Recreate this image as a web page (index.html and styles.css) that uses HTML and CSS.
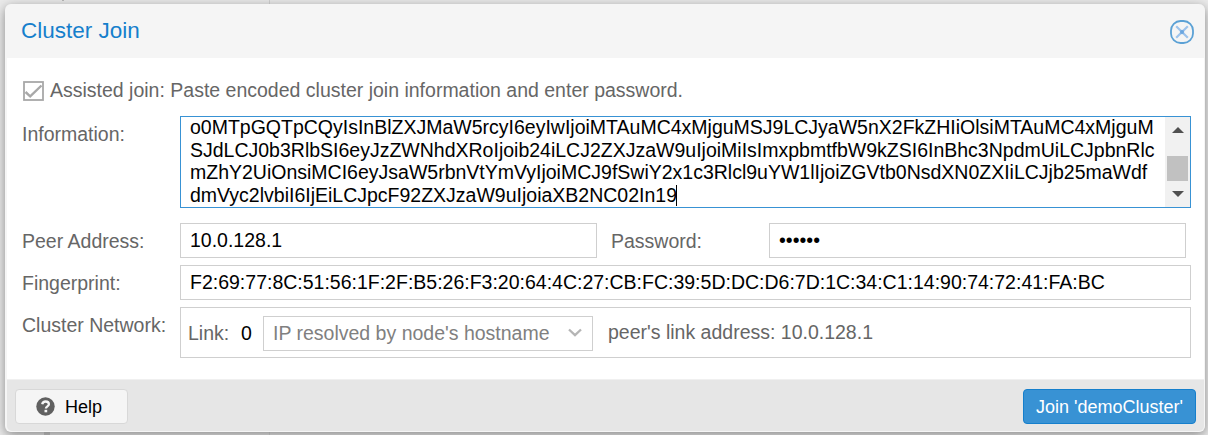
FILE: index.html
```html
<!DOCTYPE html>
<html lang="en">
<head>
    <meta charset="UTF-8">
    <title>Cluster Join</title>
    <link rel="stylesheet" href="styles.css">
</head>
<body>
    <!-- bits of the page behind the window -->
    <i class="behind behind-top"></i>
    <i class="behind behind-line"></i>
    <i class="behind behind-bottom"></i>

    <div class="window">
        <div class="header">
            <h1>Cluster Join</h1>
            <svg class="close" width="24" height="24" viewBox="0 0 24 24" fill="none">
                <rect x="1" y="1" width="22" height="22" rx="9.5" stroke="#5ba1d5" stroke-width="1.8"/>
                <path d="M6.2 6.2l11.6 11.6M17.8 6.2L6.2 17.8" stroke="#9dc3ec" stroke-width="2.2"/>
                <path d="M10.5 10.5l3 3M13.5 10.5l-3 3" stroke="#6ba6df" stroke-width="2"/>
            </svg>
        </div>

        <div class="body">
            <div class="assisted">
                <svg width="22" height="20" viewBox="0 0 22 20" fill="none">
                    <rect x="1" y="1" width="19" height="18" stroke="#a8a8a8" stroke-width="1.8"/>
                    <path d="M2.5 11l4.7 4.3L18.5 4.5" stroke="#a8a8a8" stroke-width="2.4"/>
                </svg>
                <span class="assisted-text">Assisted join: Paste encoded cluster join information and enter password.</span>
            </div>

            <div class="row info-row">
                <span class="label">Information:</span>
                <div class="info">
                    <div class="info-text">
                        <div>o0MTpGQTpCQyIsInBlZXJMaW5rcyI6eyIwIjoiMTAuMC4xMjguMSJ9LCJyaW5nX2FkZHIiOlsiMTAuMC4xMjguM</div>
                        <div>SJdLCJ0b3RlbSI6eyJzZWNhdXRoIjoib24iLCJ2ZXJzaW9uIjoiMiIsImxpbmtfbW9kZSI6InBhc3NpdmUiLCJpbnRlc</div>
                        <div>mZhY2UiOnsiMCI6eyJsaW5rbnVtYmVyIjoiMCJ9fSwiY2x1c3Rlcl9uYW1lIjoiZGVtb0NsdXN0ZXIiLCJjb25maWdf</div>
                        <div class="last-line"><span>dmVyc2lvbiI6IjEiLCJpcF92ZXJzaW9uIjoiaXB2NC02In19</span><i class="caret"></i></div>
                    </div>
                    <div class="scrollbar">
                        <svg width="12" height="6" viewBox="0 0 12 6"><path d="M0 6L6 0l6 6z" fill="#505050"/></svg>
                        <div class="thumb"></div>
                        <svg width="12" height="6" viewBox="0 0 12 6"><path d="M0 0l6 6 6-6z" fill="#505050"/></svg>
                    </div>
                </div>
            </div>

            <div class="row">
                <span class="label">Peer Address:</span>
                <div class="field half">10.0.128.1</div>
                <span class="label password-label">Password:</span>
                <div class="field half">••••••</div>
            </div>

            <div class="row">
                <span class="label">Fingerprint:</span>
                <div class="field full">F2:69:77:8C:51:56:1F:2F:B5:26:F3:20:64:4C:27:CB:FC:39:5D:DC:D6:7D:1C:34:C1:14:90:74:72:41:FA:BC</div>
            </div>

            <div class="row">
                <span class="label">Cluster Network:</span>
                <div class="network">
                    <span class="link-label">Link:</span>
                    <span class="link-number">0</span>
                    <div class="combo">
                        <span>IP resolved by node's hostname</span>
                        <svg width="14" height="9" viewBox="0 0 14 9" fill="none">
                            <path d="M1 1.5l6 5.7 6-5.7" stroke="#b5b5b5" stroke-width="2.3"/>
                        </svg>
                    </div>
                    <span class="peer-link">peer's link address: 10.0.128.1</span>
                </div>
            </div>
        </div>

        <div class="footer">
            <div class="button help">
                <svg width="19" height="19" viewBox="0 0 19 19" fill="none">
                    <circle cx="9.5" cy="9.5" r="9.2" fill="#606060"/>
                    <path d="M6.2 7.3C6.6 5.4 7.8 4.5 9.6 4.5c1.9 0 3.3 1.1 3.3 2.7 0 2.2-3 2.1-3 4.3" stroke="#f5f5f5" stroke-width="2.3"/>
                    <path d="M8.5 12.8h2.7v2.5H8.5z" fill="#f5f5f5"/>
                </svg>
                <span>Help</span>
            </div>
            <div class="button join">Join 'demoCluster'</div>
        </div>
    </div>
</body>
</html>
```
FILE: styles.css
```css
* {
    box-sizing: border-box;
}

body {
    position: relative;
    margin: 0;
    padding: 4px 3px 0 5px;
    height: 435px;
    overflow: hidden;
    background-color: #ebebeb;
    font-family: "Liberation Sans", Arial, sans-serif;
    font-size: 19.5px;
    line-height: 22px;
    color: #000;
    white-space: nowrap;
}

.behind {
    position: absolute;
    background-color: #b5b5b5;
}

.behind-top {
    top: 0;
    left: 62px;
    width: 2px;
    height: 1px;
}

.behind-line {
    top: 0;
    left: 269px;
    width: 1px;
    height: 435px;
    background-color: #d0d0d0;
}

.behind-bottom {
    top: 432px;
    left: 44px;
    width: 6px;
    height: 3px;
}

.window {
    position: relative;
    height: 428px;
    display: flex;
    flex-direction: column;
    border: 2px solid #f5f5f5;
    border-top: none;
    border-right-width: 1px;
    border-bottom-width: 1px;
    border-radius: 6px;
    background-color: #f5f5f5;
    box-shadow: 0 3px 12px #888;
}

.header {
    height: 54px;
    display: flex;
    align-items: center;
    justify-content: space-between;
    padding: 2px 10px 0 14px;
}

h1 {
    margin: 0;
    padding-bottom: 2px;
    font-size: 22.5px;
    font-weight: normal;
    color: #157fcc;
}

.body {
    height: 321px;
    padding: 21px 13px 0 15px;
    background-color: #fff;
    color: #666;
}

.assisted {
    height: 37px;
    display: flex;
    align-items: flex-start;
    gap: 5px;
}

.assisted svg {
    margin-top: 2px;
    margin-left: 1px;
}

.row {
    display: flex;
    margin-bottom: 7px;
}

.info-row {
    margin-bottom: 15px;
}

.label {
    width: 158px;
    padding-top: 7px;
}

.info {
    width: 1011px;
    height: 92px;
    display: flex;
    justify-content: space-between;
    border: 1px solid #3892d4;
    color: #000;
}

.info-text {
    margin-top: -1px;
    padding-left: 9px;
    line-height: 22.6px;
}

.last-line {
    display: flex;
}

.caret {
    width: 1px;
    height: 21px;
    margin: 1px 0 0 -1px;
    background-color: #000;
}

.scrollbar {
    width: 25px;
    display: flex;
    flex-direction: column;
    align-items: center;
    padding-top: 10px;
    background-color: #f1f1f1;
}

.thumb {
    width: 21px;
    height: 25px;
    margin: 23px 0 10px;
    background-color: #c1c1c1;
}

.field {
    height: 35px;
    padding: 5px 9px;
    border: 1px solid #cfcfcf;
    color: #000;
}

.half {
    width: 417px;
}

.full {
    width: 1011px;
}

.password-label {
    width: 172px;
    padding-left: 14px;
}

.network {
    width: 1011px;
    height: 51px;
    display: flex;
    align-items: center;
    padding-left: 7px;
    border: 1px solid #cfcfcf;
}

.link-label {
    width: 53px;
}

.link-number {
    width: 22px;
    color: #000;
}

.combo {
    width: 330px;
    height: 35px;
    display: flex;
    align-items: center;
    justify-content: space-between;
    margin-top: 2px;
    padding: 0 10px 2px 9px;
    border: 1px solid #cfcfcf;
    color: #808080;
}

.peer-link {
    margin-left: 15px;
    padding-bottom: 2px;
}

.footer {
    flex: 1;
    display: flex;
    justify-content: space-between;
    padding: 9px 8px 0;
    border-top: 1px solid #f0f0f0;
    background-color: #e6e6e6;
    border-radius: 0 0 5px 5px;
}

.button {
    height: 35px;
    display: flex;
    align-items: center;
    justify-content: center;
    border: 1px solid #d8d8d8;
    border-radius: 4px;
    background-color: #f5f5f5;
    font-size: 18px;
}

.help {
    width: 113px;
    gap: 10px;
    padding-right: 5px;
}

.join {
    width: 173px;
    border-color: #157fcc;
    background-color: #3892d4;
    color: #fff;
}
```
